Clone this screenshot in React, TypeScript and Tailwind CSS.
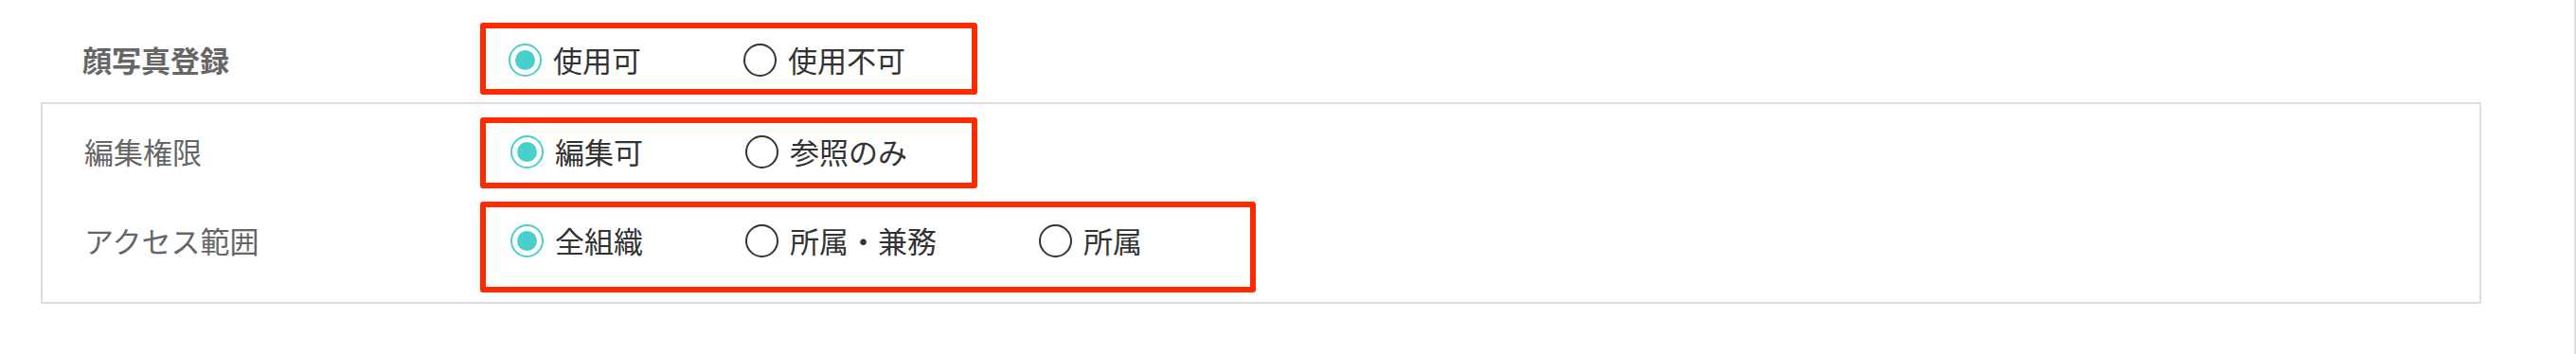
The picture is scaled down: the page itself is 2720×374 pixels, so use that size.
import React from "react";

type Option = { label: string; checked?: boolean };

const font = { fontFamily: '"Noto Sans CJK JP", "Noto Sans", sans-serif' };

function Radio({ checked }: { checked?: boolean }) {
    return checked ? (
        <span className="flex items-center justify-center w-[35px] h-[35px] rounded-full border-2 border-[#48d1cc] shrink-0">
            <span className="w-[21px] h-[21px] rounded-full bg-[#48d1cc]" />
        </span>
    ) : (
        <span className="w-[35px] h-[35px] rounded-full border-2 border-[#333] shrink-0" />
    );
}

function Options({ items }: { items: Option[] }) {
    return (
        <div className="flex items-center">
            {items.map((o, i) => (
                <label key={i} className="flex items-center gap-[12px] mr-[108px] text-[31px] leading-[40px] text-[#333]">
                    <Radio checked={o.checked} />
                    <span>{o.label}</span>
                </label>
            ))}
        </div>
    );
}

export default function App() {
    return (
        <div className="relative w-[2720px] h-[374px] bg-white border-r-2 border-[#dddddd]" style={font}>
            {/* top row */}
            <div className="flex items-center h-[108px] pt-[18px] pl-[87px]">
                <div className="w-[450px] text-[31px] leading-[40px] font-bold text-[#666]">顔写真登録</div>
                <Options items={[{ label: "使用可", checked: true }, { label: "使用不可" }]} />
            </div>

            {/* bordered sub-settings */}
            <div className="ml-[43px] w-[2577px] border-2 border-[#dddddd] pt-[14px] pb-[7px] pl-[44px]">
                <div className="flex items-center h-[72px]">
                    <div className="w-[450px] text-[31px] leading-[40px] text-[#666]">編集権限</div>
                    <Options items={[{ label: "編集可", checked: true }, { label: "参照のみ" }]} />
                </div>
                <div className="flex items-center h-[116px]">
                    <div className="w-[450px] text-[31px] leading-[40px] text-[#666]">アクセス範囲</div>
                    <Options items={[{ label: "全組織", checked: true }, { label: "所属・兼務" }, { label: "所属" }]} />
                </div>
            </div>

            {/* annotation boxes */}
            <div className="absolute left-[507px] top-[24px] w-[525px] h-[76px] border-[6px] border-[#ff2a00] rounded-[3px]" />
            <div className="absolute left-[507px] top-[124px] w-[525px] h-[75px] border-[6px] border-[#ff2a00] rounded-[3px]" />
            <div className="absolute left-[507px] top-[213px] w-[819px] h-[96px] border-[6px] border-[#ff2a00] rounded-[3px]" />
        </div>
    );
}
